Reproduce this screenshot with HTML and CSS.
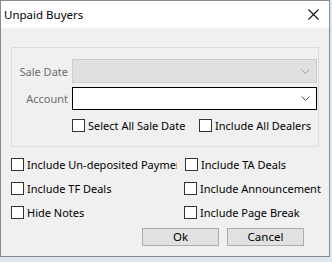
FILE: index.html
```html
<!DOCTYPE html>
<html lang="en">
<head>
    <meta charset="UTF-8">
    <title>Unpaid Buyers</title>
    <link rel="stylesheet" href="styles.css">
</head>
<body>
    <div class="window">
        <div class="titlebar">
            <span class="title">Unpaid Buyers</span>
            <svg class="close" width="11" height="11" viewBox="0 0 11 11">
                <path d="M0.5 0.5 L10.5 10.5 M10.5 0.5 L0.5 10.5" stroke="#111" stroke-width="1.1" fill="none"/>
            </svg>
        </div>

        <div class="content">
            <div class="group">
                <div class="field-row">
                    <label class="field-label">Sale Date</label>
                    <div class="combo combo-disabled">
                        <svg class="chevron" width="9" height="5" viewBox="0 0 9 5"><path d="M0.5 0.5 L4.5 4.5 L8.5 0.5" stroke="#9a9a9a" fill="none"/></svg>
                    </div>
                </div>
                <div class="field-row">
                    <label class="field-label">Account</label>
                    <div class="combo combo-active">
                        <svg class="chevron" width="9" height="5" viewBox="0 0 9 5"><path d="M0.5 0.5 L4.5 4.5 L8.5 0.5" stroke="#555" fill="none"/></svg>
                    </div>
                </div>
                <div class="check-row">
                    <label class="check check-wide"><span class="box"></span>Select All Sale Date</label>
                    <label class="check"><span class="box"></span>Include All Dealers</label>
                </div>
            </div>

            <div class="options">
                <label class="check"><span class="box"></span><span class="clip">Include Un-deposited Payments</span></label>
                <label class="check opt-ta"><span class="box"></span>Include TA Deals</label>
                <label class="check"><span class="box"></span>Include TF Deals</label>
                <label class="check"><span class="box"></span>Include Announcement</label>
                <label class="check"><span class="box"></span>Hide Notes</label>
                <label class="check"><span class="box"></span>Include Page Break</label>
            </div>

            <div class="buttons">
                <button class="btn">Ok</button>
                <button class="btn">Cancel</button>
            </div>
        </div>
    </div>
</body>
</html>
```

FILE: styles.css
```css
body {
    margin: 0;
    background: #dfe6ee;
    font-family: "Noto Sans", "Open Sans", sans-serif;
    font-size: 11px;
    color: #000;
}

.window {
    width: 328px;
    height: 255px;
    border: 1px solid #8a8a8a;
    background: #f0f0f0;
    display: flex;
    flex-direction: column;
}

.titlebar {
    height: 27px;
    background: #fff;
    display: flex;
    align-items: center;
    justify-content: space-between;
    padding: 0 10px 0 3px;
}

.title {
    font-size: 11.5px;
}

.content {
    padding: 19px 0 0 10px;
}

.group {
    width: 306px;
    height: 87px;
    border: 1px solid #dcdcdc;
    padding-top: 11px;
}

.field-row {
    display: flex;
    align-items: center;
    margin-bottom: 4px;
}

.field-label {
    width: 56px;
    text-align: right;
    color: #6d6d6d;
    margin-right: 4px;
}

.combo {
    display: flex;
    align-items: center;
    justify-content: flex-end;
    padding-right: 6px;
    box-sizing: border-box;
}

.combo-disabled {
    width: 245px;
    height: 24px;
    background: #e0e0e0;
    border: 1px solid #cccccc;
}

.combo-active {
    width: 245px;
    height: 23px;
    background: #fff;
    border: 1px solid #000;
}

.check-row {
    display: flex;
    margin: 8px 0 0 60px;
}

.check {
    display: flex;
    align-items: center;
    height: 14px;
    white-space: nowrap;
}

.check-wide {
    width: 127px;
}

.box {
    width: 11px;
    height: 11px;
    border: 1px solid #333;
    background: #fff;
    margin-right: 3px;
    flex-shrink: 0;
}

.options {
    display: grid;
    grid-template-columns: 173px 140px;
    row-gap: 10px;
    margin-top: 10px;
}

.clip {
    width: 150px;
    overflow: hidden;
}

.opt-ta {
    margin-left: 1px;
}

.buttons {
    display: flex;
    gap: 8px;
    margin: 9px 0 0 131px;
}

.btn {
    width: 77px;
    height: 18px;
    padding: 0;
    background: #e1e1e1;
    border: 1px solid #adadad;
    font-family: "Noto Sans", "Open Sans", sans-serif;
    font-size: 11.5px;
    line-height: 14px;
    color: #000;
}
```
